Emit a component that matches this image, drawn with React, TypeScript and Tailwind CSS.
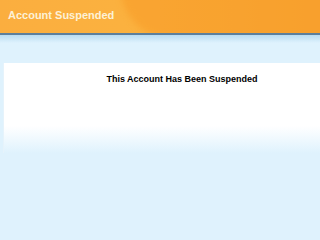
import React from 'react';

const App: React.FC = () => {
  return (
    <div className="h-[240px] w-[320px] overflow-hidden bg-[#dff2fd] font-['Liberation_Sans',Arial,sans-serif]">
      <div className="relative h-[33px] overflow-hidden bg-gradient-to-r from-[#fbae3f] via-[#fbb23f] to-[#f9a735]">
        <div className="absolute -right-[60px] -top-[70px] h-[110px] w-[260px] rounded-full bg-[#f89c28] opacity-60 blur-[3px]" />
        <div className="relative px-[8px] pt-[8px] text-[11px] font-bold leading-[14px] text-[#fdf1d6]">
          Account Suspended
        </div>
      </div>
      <div className="h-[2px] bg-[#5d7f9c]" />
      <div className="h-[8px] bg-gradient-to-b from-[#b9dcf2] to-[#dff2fd]" />
      <div className="h-[20px]" />
      <div className="ml-[3px] h-[90px] border-l border-[#e6f3fb] bg-gradient-to-b from-white from-70% to-[#dff2fd]">
        <div className="pl-[40px] pt-[10px] text-center text-[9px] font-bold leading-[12px] text-black">
          This Account Has Been Suspended
        </div>
      </div>
    </div>
  );
};

export default App;
